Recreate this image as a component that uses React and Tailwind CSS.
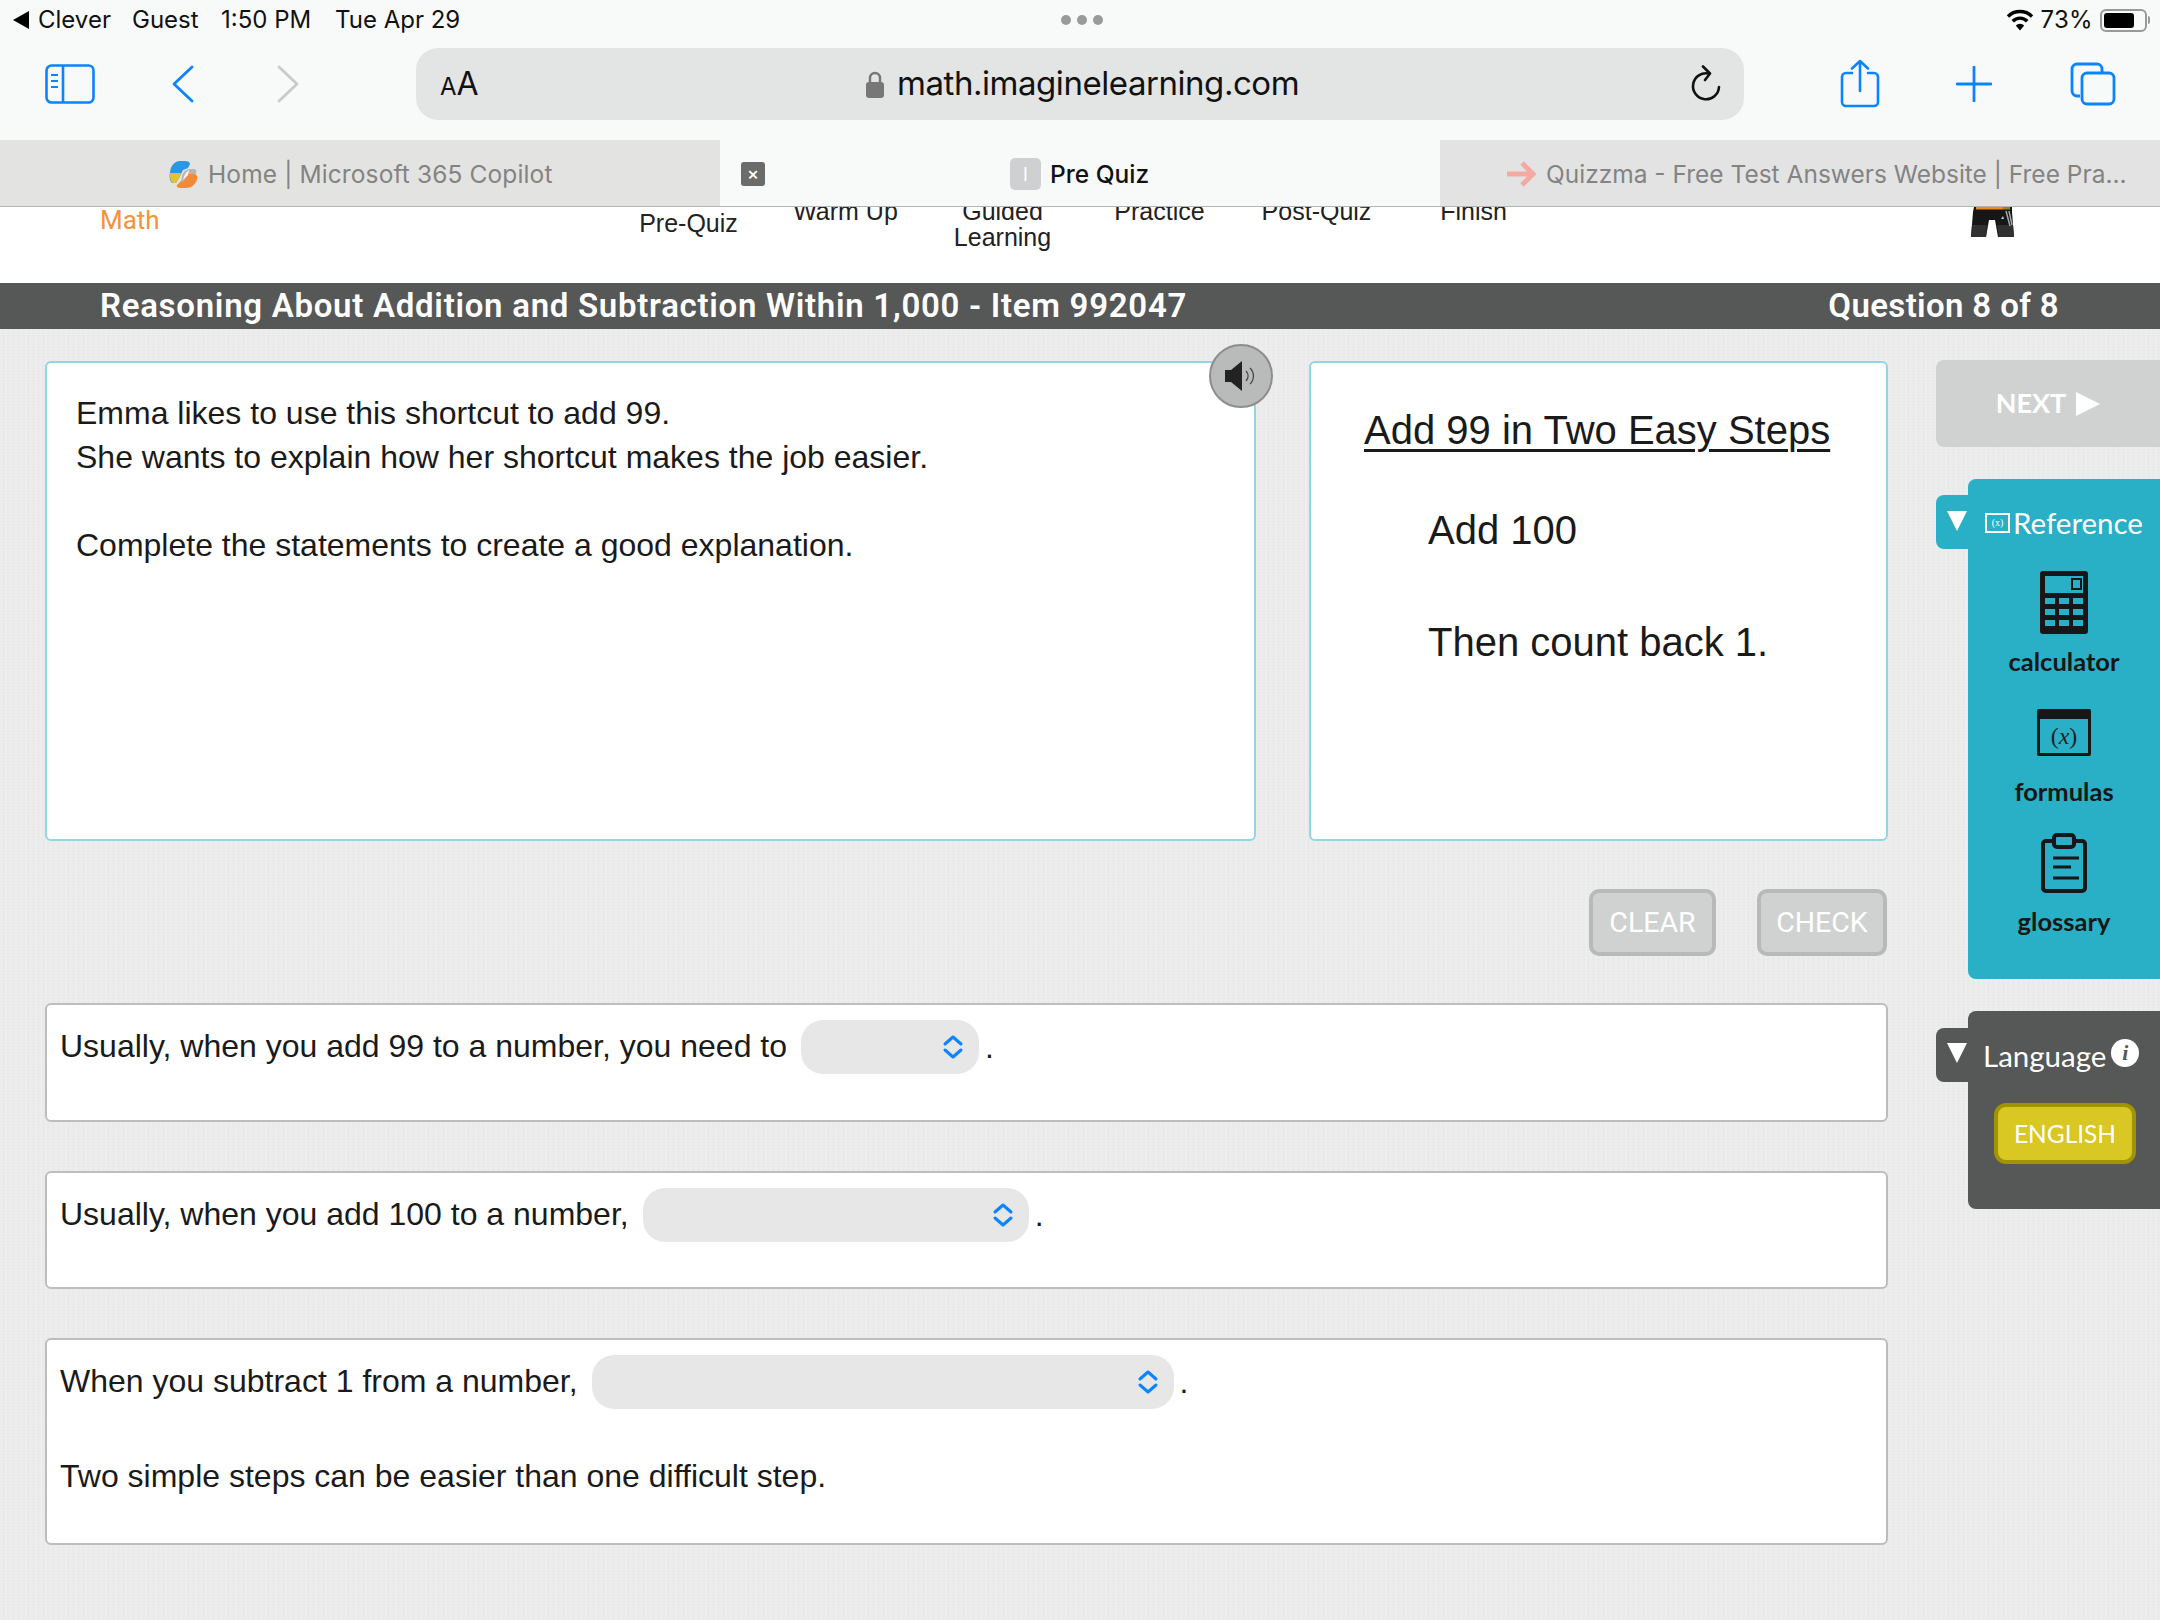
import React from "react";

const texture =
  "bg-[#ebebeb] bg-[image:repeating-linear-gradient(0deg,rgba(0,0,0,0.008)_0px,rgba(0,0,0,0.008)_1px,transparent_1px,transparent_3px),repeating-linear-gradient(90deg,rgba(255,255,255,0.16)_0px,rgba(255,255,255,0.16)_2px,transparent_2px,transparent_5px)]";
const sig = "font-['Roboto',sans-serif]";
const nun = "font-['Lato',sans-serif]";
const BLUE = "#0a84ff";

function SidebarIcon() {
  return (
    <svg width="50" height="40" viewBox="0 0 50 40" fill="none" stroke={BLUE} strokeWidth="2.6">
      <rect x="1.5" y="1.5" width="47" height="37" rx="5" />
      <path d="M18 1.5V38.5" />
      <path d="M6 11h7M6 17h7M6 23h7" strokeWidth="2" />
    </svg>
  );
}
function Chevron({ right, color }) {
  return (
    <svg width="22" height="38" viewBox="0 0 22 38" fill="none" stroke={color} strokeWidth="2.8" strokeLinecap="round" strokeLinejoin="round">
      <path d={right ? "M2 2L20 19L2 36" : "M20 2L2 19L20 36"} />
    </svg>
  );
}
function Lock() {
  return (
    <svg width="20" height="27" viewBox="0 0 20 27">
      <path d="M5 12V7a5 5 0 0 1 10 0v5" fill="none" stroke="#777" strokeWidth="2.4" />
      <rect x="1" y="11" width="18" height="16" rx="3" fill="#777" />
    </svg>
  );
}
function Reload() {
  return (
    <svg width="32" height="38" viewBox="0 0 32 38" fill="none" stroke="#111" strokeWidth="2.6" strokeLinecap="round" strokeLinejoin="round">
      <path d="M19 8.6A13 13 0 1 0 29 22" />
      <path d="M13 1.5L20 8.5L15 15" />
    </svg>
  );
}
function Share() {
  return (
    <svg width="40" height="50" viewBox="0 0 40 50" fill="none" stroke={BLUE} strokeWidth="2.6" strokeLinecap="round" strokeLinejoin="round">
      <path d="M12 14H6a4 4 0 0 0-4 4v25a4 4 0 0 0 4 4h28a4 4 0 0 0 4-4V18a4 4 0 0 0-4-4h-6" />
      <path d="M20 32V2M12 9.5L20 2L28 9.5" />
    </svg>
  );
}
function Plus() {
  return (
    <svg width="36" height="36" viewBox="0 0 36 36" stroke={BLUE} strokeWidth="2.8" strokeLinecap="round">
      <path d="M18 1V35M1 18H35" />
    </svg>
  );
}
function Tabs() {
  return (
    <svg width="46" height="44" viewBox="0 0 46 44" fill="none" stroke={BLUE} strokeWidth="2.8">
      <path d="M10 34H7a5 5 0 0 1-5-5V7a5 5 0 0 1 5-5h20a5 5 0 0 1 5 5v3" />
      <rect x="12" y="11" width="32" height="31" rx="5" />
    </svg>
  );
}
function Wifi() {
  return (
    <svg width="28" height="22" viewBox="0 0 28 22" fill="none" stroke="#000" strokeWidth="3.4">
      <path d="M2 7.5a17 17 0 0 1 24 0" />
      <path d="M6.8 12.2a10 10 0 0 1 14.4 0" />
      <path d="M14 21.5l-4.2-5a6 6 0 0 1 8.4 0z" fill="#000" stroke="none" />
    </svg>
  );
}
function Battery() {
  return (
    <div className="flex items-center">
      <div className="w-[47px] h-[23px] rounded-[6px] border-2 border-[#999] p-[2px]">
        <div className="w-[30px] h-full bg-black rounded-[3px]" />
      </div>
      <div className="w-[2px] h-[8px] bg-[#999] ml-[1px] rounded-r" />
    </div>
  );
}
function Copilot() {
  return (
    <svg width="30" height="27" viewBox="0 0 30 27">
      <path d="M2 11C3 4 7 0 12 0h5c3 0 5 1 5 3l-2 4-5 2-4 8-3 5H5C2 22 1 16 2 11z" fill="#2d96e0" />
      <path d="M2 12h11l-2 5-3 5H5C3 21 1.500 17 2 12z" fill="#e2c52e" />
      <path d="M14 19l5-6h8c2 1 3 3 2 6-2 5-6 8-11 8h-5c-3 0-5-1-4-3l2-2z" fill="#f28a38" />
      <path d="M14 15c1-4 4-7 8-7h4c2 0 3 2 2 5h-8l-4 7-3 1z" fill="#b9b6b0" />
      <path d="M15 19c1-4 2-7 6-10l-1 5z" fill="#f6f4ee" />
    </svg>
  );
}
function RedArrow() {
  return (
    <svg width="30" height="28" viewBox="0 0 30 28" fill="none" stroke="#f4aaa2" strokeWidth="5">
      <path d="M0 14H25M15 3L26 14L15 25" />
    </svg>
  );
}
function Legs() {
  return (
    <svg width="43" height="31" viewBox="0 0 43 31">
      <path d="M3 0H41V5L43 30H27L24 13H18L15 30H0L2 5z" fill="#161616" />
      <path d="M1 18H16L15 30H0zM26 18H42L43 30H28z" fill="#303030" />
      <rect x="5" y="0" width="27" height="2.500" fill="#ee8a1c" />
      <rect x="32" y="0" width="7" height="2.500" fill="#8a8a20" />
      <path d="M35 4L39 19M38 4L41 18" stroke="#a8a8a8" strokeWidth="1.500" />
      <path d="M30 12h3l-1-3z" fill="#9fd8e6" />
    </svg>
  );
}
function SelectChevrons() {
  return (
    <svg width="22" height="24" viewBox="0 0 22 24" fill="none" stroke={BLUE} strokeWidth="3" strokeLinecap="round" strokeLinejoin="round">
      <path d="M3 9L11 2L19 9M3 15L11 22L19 15" />
    </svg>
  );
}
function Speaker() {
  return (
    <svg width="32" height="30" viewBox="0 0 32 30">
      <path d="M0 9H6L17 0V30L6 21H0z" fill="#222" />
      <path d="M21 10a7 7 0 0 1 0 10M25 7a11 11 0 0 1 0 16" fill="none" stroke="#444" strokeWidth="1.2" />
    </svg>
  );
}
function Calculator() {
  const cells = [];
  for (let r = 0; r < 3; r++)
    for (let c = 0; c < 3; c++) cells.push(<rect key={`${r}${c}`} x={5 + c * 14} y={27 + r * 11} width="10" height="6" fill="#29afc6" />);
  return (
    <svg width="48" height="63" viewBox="0 0 48 63">
      <rect width="48" height="63" rx="3" fill="#171717" />
      <rect x="5" y="5" width="38" height="17" fill="#29afc6" />
      <rect x="32" y="8" width="9" height="10" fill="#29afc6" stroke="#171717" strokeWidth="2" />
      {cells}
    </svg>
  );
}
function Formulas() {
  return (
    <div className="w-[54px] h-[47px] border-[3px] border-[#171717] rounded-[2px] border-t-[10px] flex items-center justify-center font-['Liberation_Serif',serif] text-[24px] leading-none text-[#222]">
      (<i>x</i>)
    </div>
  );
}
function Glossary() {
  return (
    <svg width="46" height="61" viewBox="0 0 46 61" fill="none" stroke="#171717" strokeWidth="4">
      <rect x="2" y="9" width="42" height="50" rx="3" />
      <rect x="13" y="3" width="20" height="12" rx="3" fill="#29afc6" />
      <path d="M12 26H38M12 35H30M12 46H38" strokeWidth="3" />
    </svg>
  );
}
function Triangle() {
  return (
    <svg width="20" height="20" viewBox="0 0 20 20">
      <path d="M0 0H20L10 20z" fill="#fff" />
    </svg>
  );
}

function NavItem({ children, offset }) {
  return (
    <div className={`w-[157px] shrink-0 text-center text-[25px] leading-[26px] text-[#222] ${offset}`}>{children}</div>
  );
}
function Select({ width }) {
  return (
    <span className={`inline-flex items-center justify-end h-[54px] rounded-[22px] bg-[#e7e7e7] pr-[15px] ${width}`}>
      <SelectChevrons />
    </span>
  );
}
function Line({ children, className = "" }) {
  return <div className={`flex items-center gap-[14px] h-[54px] ${className}`}>{children}</div>;
}

export default function App() {
  return (
    <div className="w-[2160px] h-[1620px] overflow-hidden flex flex-col font-['Liberation_Sans',sans-serif] text-[#1a1a1a]">
      <div className="shrink-0 h-[206px] bg-[#f8fafa] flex flex-col">
        <div className="h-[40px] flex items-center pl-[13px] pr-[10px] text-[24px] text-[#111] font-['Inter',sans-serif]">
          <div className="flex-1 flex items-center">
            <svg width="16" height="18" viewBox="0 0 16 18" className="mr-[9px]"><path d="M16 0V18L0 9z" fill="#000" /></svg>
            <span className="w-[94px]">Clever</span>
            <span className="w-[89px]">Guest</span>
            <span className="w-[114px]">1:50 PM</span>
            <span>Tue Apr 29</span>
          </div>
          <div className="flex justify-center gap-[6px]">
            <span className="w-[10px] h-[10px] rounded-full bg-[#9a9a9a]" />
            <span className="w-[10px] h-[10px] rounded-full bg-[#9a9a9a]" />
            <span className="w-[10px] h-[10px] rounded-full bg-[#9a9a9a]" />
          </div>
          <div className="flex-1 flex items-center justify-end gap-[7px]">
            <Wifi />
            <span className="tracking-[0.3px]">73%</span>
            <Battery />
          </div>
        </div>
        <div className="h-[100px] flex items-center">
          <div className="w-[416px] flex items-center pl-[45px] pb-[12px]">
            <SidebarIcon />
            <div className="ml-[77px]"><Chevron color={BLUE} /></div>
            <div className="ml-[83px]"><Chevron right color="#c9caca" /></div>
          </div>
          <div className="w-[1328px] h-[72px] mb-[12px] rounded-[22px] bg-[#e3e4e4] flex items-center pl-[24px] pr-[22px]">
            <span className="font-['Inter',sans-serif] text-[#111] w-[425px]"><span className="text-[24px]">A</span><span className="text-[32px]">A</span></span>
            <Lock />
            <span className="ml-[12px] text-[33px] font-['Inter',sans-serif] tracking-[-0.45px] text-[#111] flex-1">math.imaginelearning.com</span>
            <Reload />
          </div>
          <div className="flex-1 flex items-center pl-[96px] pb-[12px]">
            <Share />
            <div className="ml-[76px]"><Plus /></div>
            <div className="ml-[78px]"><Tabs /></div>
          </div>
        </div>
        <div className="h-[66px] flex items-stretch font-['Inter',sans-serif] text-[24.5px] pt-[2px]">
          <div className="w-[720px] bg-[#e3e3e2] -mt-[2px] pt-[2px] flex items-center pl-[168px] gap-[10px] text-[#838383]">
            <Copilot />
            <span className="whitespace-nowrap tracking-[0.12px]">Home | Microsoft 365 Copilot</span>
          </div>
          <div className="w-[720px] flex items-center pl-[21px] text-[#111] font-medium">
            <span className="w-[24px] h-[24px] rounded-[3px] bg-[#6b6b6b] text-white flex items-center justify-center text-[18px] leading-none">×</span>
            <span className="ml-[245px] w-[31px] h-[32px] rounded-[5px] bg-[#cfd0d1] flex items-center justify-center text-white text-[18px] font-normal">I</span>
            <span className="ml-[9px]">Pre Quiz</span>
          </div>
          <div className="flex-1 bg-[#e3e3e3] -mt-[2px] pt-[2px] flex items-center pl-[67px] text-[#838383]">
            <RedArrow />
            <span className="ml-[9px] whitespace-nowrap">Quizzma - Free Test Answers Website | Free Pra...</span>
          </div>
        </div>
      </div>
      <div className="shrink-0 h-[77px] bg-white border-t border-[#b5b5b5] overflow-hidden flex items-start">
        <span className={`${sig} text-[#f5923a] text-[26px] leading-[34px] ml-[100px] -mt-[4px] w-[510px]`}>Math</span>
        <NavItem offset="mt-[3px]">Pre-Quiz</NavItem>
        <NavItem offset="-mt-[9px]">Warm Up</NavItem>
        <NavItem offset="-mt-[9px]">Guided<br />Learning</NavItem>
        <NavItem offset="-mt-[9px]">Practice</NavItem>
        <NavItem offset="-mt-[9px]">Post-Quiz</NavItem>
        <NavItem offset="-mt-[9px]">Finish</NavItem>
        <div className="ml-[419px] shrink-0"><Legs /></div>
      </div>
      <div className={`shrink-0 h-[46px] bg-[#565757] text-white flex items-center justify-between pl-[100px] pr-[101px] ${sig} font-semibold text-[33px]`}>
        <span className="tracking-[0.72px]">Reasoning About Addition and Subtraction Within 1,000 - Item 992047</span>
        <span className="tracking-[0.35px]">Question 8 of 8</span>
      </div>
      <div className={`flex-1 flex items-start pl-[45px] ${texture}`}>
        <div className="w-[1843px] shrink-0 pt-[32px]">
          <div className="flex gap-[53px] text-[32px]">
            <div className="relative w-[1211px] h-[480px] bg-white border-2 border-[#8ed8e6] rounded-[6px] pl-[29px] pt-[28px] leading-[44px]">
              <div>Emma likes to use this shortcut to add 99.</div>
              <div>She wants to explain how her shortcut makes the job easier.</div>
              <div className="mt-[44px]">Complete the statements to create a good explanation.</div>
              <div className="absolute -top-[19px] -right-[19px] w-[64px] h-[64px] rounded-full bg-[#b9baba] border-2 border-[#8d8d8d] flex items-center justify-center">
                <Speaker />
              </div>
            </div>
            <div className="w-[579px] h-[480px] bg-white border-2 border-[#8ed8e6] rounded-[6px] pl-[53px] pt-[42px] text-[40px] leading-[50px]">
              <div className="underline underline-offset-[5px] decoration-[3px]">Add 99 in Two Easy Steps</div>
              <div className="ml-[64px] mt-[50px]">Add 100</div>
              <div className="ml-[64px] mt-[62px]">Then count back 1.</div>
            </div>
          </div>
          <div className={`flex justify-end gap-[41px] mt-[48px] pr-[1px] ${sig} text-[28.5px] text-white`}>
            <div className="w-[127px] h-[67px] rounded-[10px] bg-[#d0d2d2] border-[4px] border-[#b8baba] pt-[2px] flex items-center justify-center">CLEAR</div>
            <div className="w-[130px] h-[67px] rounded-[10px] bg-[#d0d2d2] border-[4px] border-[#b8baba] pt-[2px] flex items-center justify-center">CHECK</div>
          </div>
          <div className="mt-[47px] flex flex-col gap-[49px] text-[32px]">
            <div className="h-[119px] bg-white border-2 border-[#bdbdbd] rounded-[6px] pl-[13px] pt-[15px]">
              <Line>
                <span className="-mt-[3px]">Usually, when you add 99 to a number, you need to</span>
                <Select width="w-[178px]" />
                <span className="-ml-[8px]">.</span>
              </Line>
            </div>
            <div className="h-[118px] bg-white border-2 border-[#bdbdbd] rounded-[6px] pl-[13px] pt-[15px]">
              <Line>
                <span className="-mt-[3px]">Usually, when you add 100 to a number,</span>
                <Select width="w-[386px]" />
                <span className="-ml-[8px]">.</span>
              </Line>
            </div>
            <div className="h-[207px] bg-white border-2 border-[#bdbdbd] rounded-[6px] pl-[13px] pt-[15px]">
              <Line>
                <span className="-mt-[3px]">When you subtract 1 from a number,</span>
                <Select width="w-[582px]" />
                <span className="-ml-[8px]">.</span>
              </Line>
              <div className="mt-[45px] leading-[44px]">Two simple steps can be easier than one difficult step.</div>
            </div>
          </div>
        </div>
        <div className={`flex-1 pl-[48px] pt-[31px] ${nun}`}>
          <div className="h-[87px] rounded-l-[8px] bg-[#d0d2d2] text-white text-[27px] font-bold flex items-center justify-center gap-[10px]">
            NEXT
            <svg width="24" height="24" viewBox="0 0 24 24"><path d="M0 0L24 12L0 24z" fill="#fff" /></svg>
          </div>
          <div className="flex items-start mt-[32px]">
            <div className="w-[32px] h-[54px] mt-[16px] rounded-l-[8px] bg-[#29afc6] flex items-center pl-[11px] pb-[2px]"><Triangle /></div>
            <div className="flex-1 h-[500px] rounded-l-[8px] bg-[#29afc6] flex flex-col items-center">
              <div className="mt-[23px] flex items-center self-start ml-[17px] text-white text-[29.5px] leading-[42px]">
                <span className="w-[25px] h-[20px] border-2 border-white font-['Liberation_Serif',serif] text-[10px] flex items-center justify-center leading-none">(x)</span>
                <span className="ml-[3px]">Reference</span>
              </div>
              <div className="mt-[27px]"><Calculator /></div>
              <div className="text-[25.5px] font-bold leading-[34px] mt-[10px] text-[#171717]">calculator</div>
              <div className="mt-[31px]"><Formulas /></div>
              <div className="text-[25.5px] font-bold leading-[34px] mt-[18px] text-[#171717]">formulas</div>
              <div className="mt-[24px]"><Glossary /></div>
              <div className="text-[25.5px] font-bold leading-[34px] mt-[11px] text-[#171717]">glossary</div>
            </div>
          </div>
          <div className="flex items-start mt-[32px]">
            <div className="w-[32px] h-[54px] mt-[17px] rounded-l-[8px] bg-[#565757] flex items-center pl-[11px] pb-[4px]"><Triangle /></div>
            <div className="flex-1 h-[198px] rounded-l-[8px] bg-[#565757] flex flex-col">
              <div className="mt-[27px] ml-[15px] flex items-center text-white text-[29.5px] leading-[36px]">
                Language
                <span className="ml-[5px] w-[28px] h-[28px] -mt-[6px] rounded-full bg-white text-[#565757] flex items-center justify-center font-['Liberation_Serif',serif] italic font-bold text-[22px]">i</span>
              </div>
              <div className="ml-[26px] mt-[29px] w-[142px] h-[61px] rounded-[12px] bg-[#d9c723] border-[4px] border-[#a09500] text-white text-[24.5px] pt-[2px] flex items-center justify-center">ENGLISH</div>
            </div>
          </div>
        </div>
      </div>
    </div>
  );
}
